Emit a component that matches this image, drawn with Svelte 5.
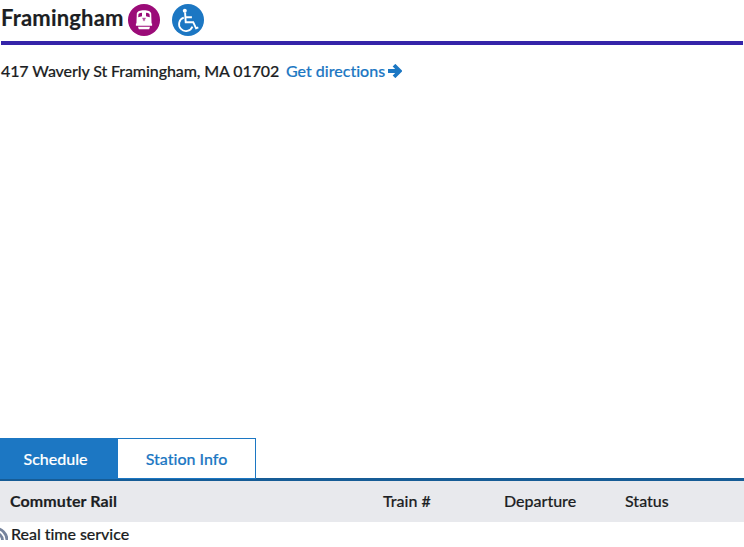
<script>
  const columns = ['Train #', 'Departure', 'Status'];
</script>

<main>
  <header>
    <h1>Framingham</h1>
    <svg class="badge" viewBox="0 0 32 32" role="img" aria-label="Commuter Rail">
      <circle cx="16" cy="16" r="16" fill="#9b0b78" />
      <path fill="#fff" fill-rule="evenodd" d="M8.4 20.4 8.8 9.6C9.2 7.4 12 6.2 16 6.2s6.8 1.2 7.2 3.4l.4 10.8ZM10.2 13.2l3.8-.9V8.8c-1.5.1-2.7.5-3.5 1.1ZM18 8.8v3.5l3.8.9-.3-3.3c-.8-.6-2-1-3.5-1.1Z" />
      <path d="M14.2 14.3h3.6M14.8 15.8h2.4M16 14v3.2" fill="none" stroke="#9b0b78" stroke-width=".7" />
      <path fill="#fff" d="M7.9 19.4h16.2v2.4H7.9ZM10 22.8h12l-.8 2.4H10.8Z" />
    </svg>
    <svg class="badge wheel" viewBox="0 0 32 32" role="img" aria-label="Accessible">
      <circle cx="16" cy="16" r="16" fill="#1c77c3" />
      <circle cx="12.8" cy="6.7" r="2" fill="#fff" />
      <path d="M13.1 8.5l.6 9.7h7.5l2.9 6.1 2.2-.9M13.5 13.2h6.4" fill="none" stroke="#fff" stroke-width="1.9" />
      <path d="M11.8 13.6a6.9 6.9 0 1 0 8.6 9" fill="none" stroke="#fff" stroke-width="1.8" />
    </svg>
  </header>

  <p class="address">
    <span class="street">417 Waverly St Framingham, MA 01702</span>
    <a href="#directions"><span>Get directions</span>
      <svg viewBox="0 0 14 14" width="14" height="14" aria-hidden="true">
        <path d="M0 7h11M6 1.2 11.8 7 6 12.8" fill="none" stroke="currentColor" stroke-width="3.8" />
      </svg>
    </a>
  </p>

  <nav>
    <button class="active">Schedule</button>
    <button class="info">Station Info</button>
  </nav>

  <div class="head">
    <strong>Commuter Rail</strong>
    {#each columns as column}<span>{column}</span>{/each}
  </div>

  <div class="service">
    <svg viewBox="0 0 8 13" width="8" height="13" aria-hidden="true">
      <path d="M-5 1.2A12 12 0 0 1 7 13.2M-5 5.8A7.5 7.5 0 0 1 2.5 13.3" fill="none" stroke="#77849d" stroke-width="2.8" />
    </svg>
    <span>Real time service</span>
  </div>
</main>

<style>
  :global(body) { background: #fff; }
  main {
    width: 744px;
    height: 547px;
    overflow: hidden;
    display: flex;
    flex-direction: column;
    font: 500 16px/20px Lato, sans-serif;
    font-variant-ligatures: none;
    -webkit-text-stroke: .18px currentColor;
    color: #1c1e23;
  }
  header {
    box-sizing: border-box;
    height: 45px;
    margin: 0 1px;
    border-bottom: 4px solid #3524a9;
    display: flex;
    align-items: flex-start;
    padding-top: 4px;
    flex: none;
  }
  h1 { width: 127px; margin: 0; font-size: 22px; line-height: 28px; font-weight: 700; letter-spacing: .18px; }
  .badge { width: 32px; height: 32px; flex: none; }
  .wheel { margin-left: 12px; }
  .address { margin: 16px 0 0 1px; display: flex; white-space: nowrap; height: 20px; }
  .street { width: 285px; letter-spacing: -.1px; }
  a { color: #1c77c3; text-decoration: none; display: flex; align-items: center; }
  a svg { margin-left: 3px; }
  nav {
    margin-top: auto;
    height: 40px;
    display: flex;
    border-bottom: 3px solid #165c96;
    flex: none;
  }
  button {
    box-sizing: border-box;
    height: 41px;
    padding: 0;
    border: 1px solid #1c77c3;
    font: inherit;
    font-variant-ligatures: none;
    color: #1c77c3;
    background: #fff;
  }
  .active { width: 118px; padding-right: 7px; color: #fff; background: #1c77c3; }
  .info { width: 138px; border-left: 0; }
  .head {
    box-sizing: border-box;
    height: 41px;
    background: #e8e9ed;
    display: grid;
    grid-template-columns: 373px 121px 121px 1fr;
    align-items: center;
    padding: 0 0 2px 10px;
    flex: none;
  }
  strong { font-weight: 700; letter-spacing: .1px; }
  .service { height: 25px; flex: none; display: flex; gap: 3px; white-space: nowrap; letter-spacing: -.04px; }
  .service svg { margin-top: 5px; flex: none; }
  .service span { margin-top: 2px; }
</style>
